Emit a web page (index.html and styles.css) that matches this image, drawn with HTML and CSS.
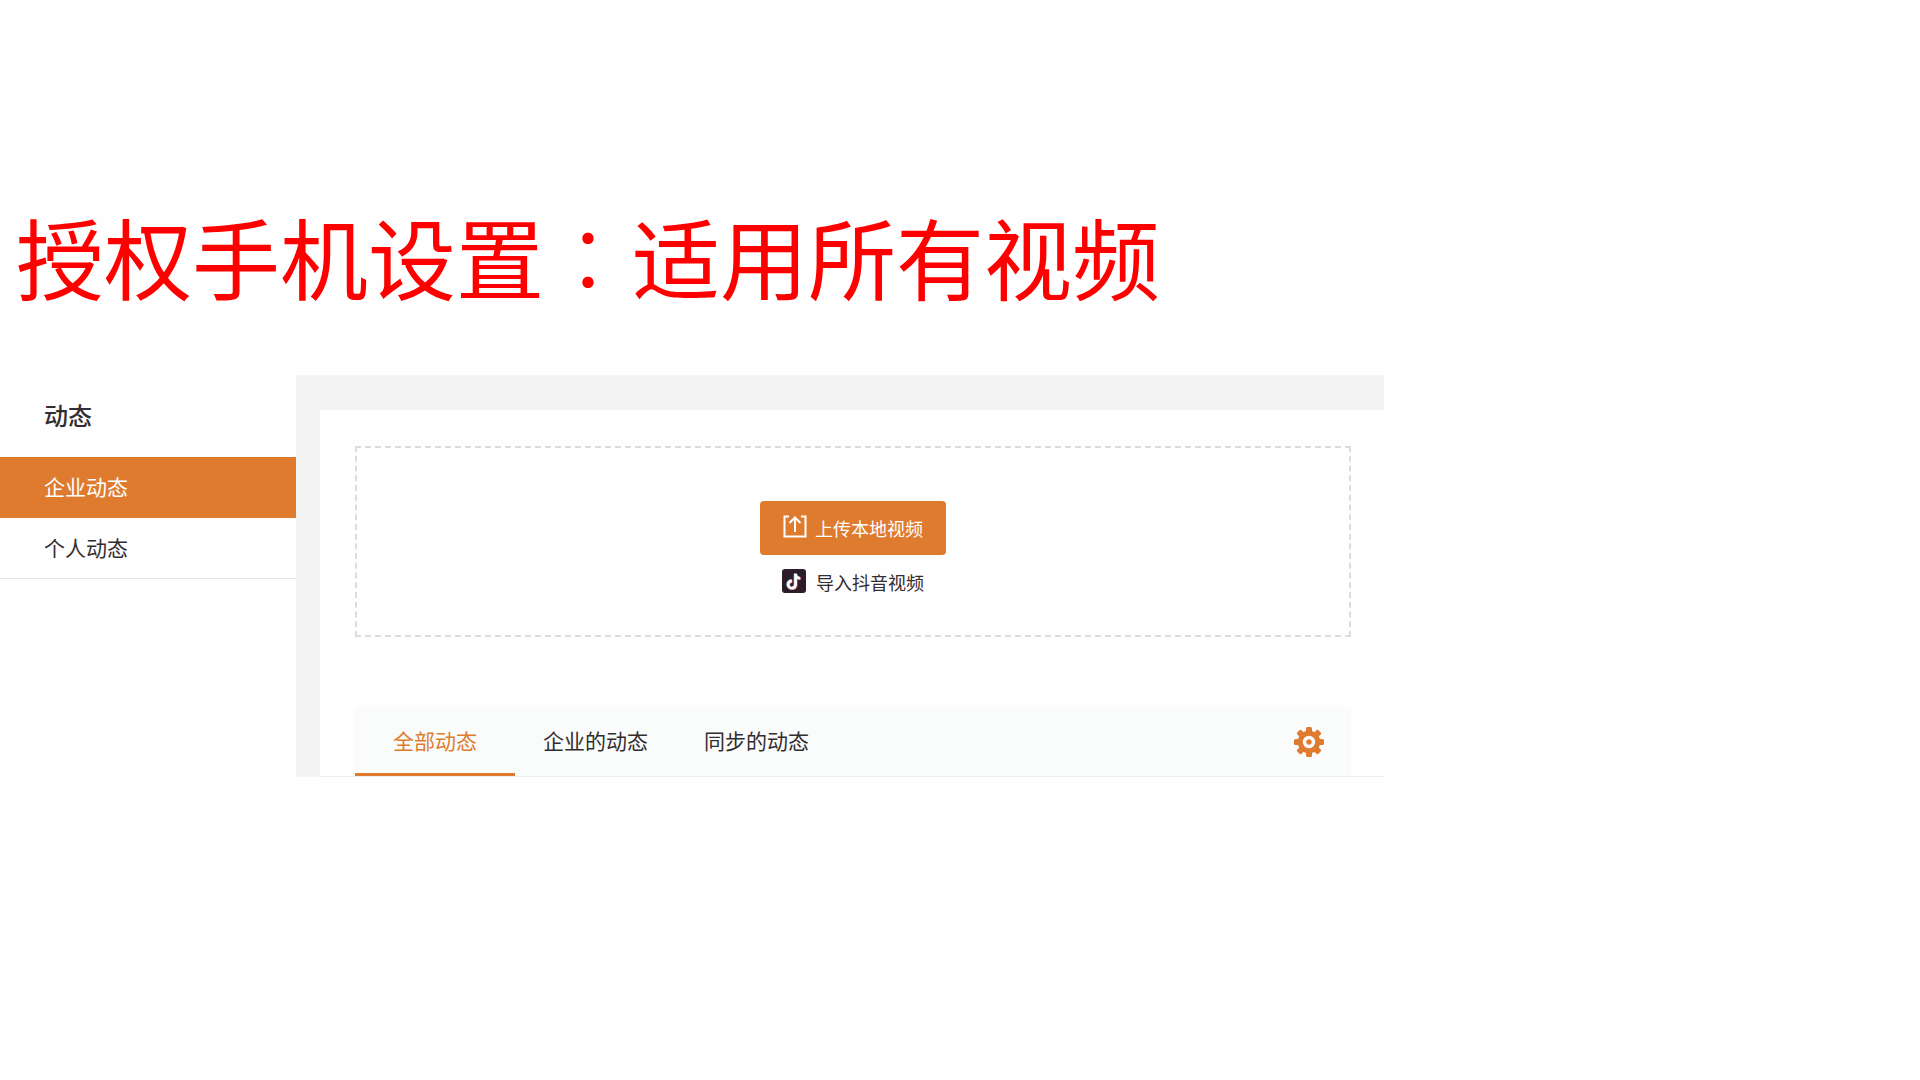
FILE: index.html
```html
<!DOCTYPE html>
<html lang="zh-CN">
<head>
<meta charset="utf-8">
<meta name="viewport" content="width=device-width, initial-scale=1">
<title>授权手机设置</title>
<link rel="stylesheet" href="styles.css">
</head>
<body>
<h1 class="title">授权手机设置<span class="colon" lang="zh-TW">：</span>适用所有视频</h1>
<div class="app">
  <aside class="sidebar">
    <h2 class="sidebar-title">动态</h2>
    <nav class="menu">
      <a class="menu-item active" href="#company">企业动态</a>
      <a class="menu-item" href="#personal">个人动态</a>
    </nav>
  </aside>
  <main class="content">
    <div class="panel">
      <section class="upload">
        <button class="upload-button" type="button">
          <svg class="icon" viewBox="0 0 24 24" fill="none" stroke="currentColor" stroke-width="2" aria-hidden="true"><path d="M6 1.5H1.5v20h21v-20H18M12 17V2.5M6.5 8L12 2.5 17.5 8"/></svg>
          <span>上传本地视频</span>
        </button>
        <a class="import-link" href="#import">
          <svg class="icon" viewBox="0 0 24 24" aria-hidden="true">
            <rect width="24" height="24" rx="3" fill="#2d1d2b"/>
            <g fill="none" stroke-width="2.6">
              <path d="M13 4.5v10.8a3.7 3.7 0 1 1-3.7-3.7M13 4.5c.3 2.7 2 4.3 4.6 4.5" stroke="#8fd6d8"/>
              <path d="M14.2 5.3v10.8a3.7 3.7 0 1 1-3.7-3.7M14.2 5.3c.3 2.7 2 4.3 4.6 4.5" stroke="#e46a76"/>
              <path d="M13.6 4.8v10.8a3.7 3.7 0 1 1-3.7-3.7M13.6 4.8c.3 2.7 2 4.3 4.6 4.5" stroke="#fff"/>
            </g>
          </svg>
          <span>导入抖音视频</span>
        </a>
      </section>
      <div class="tabs">
        <button class="tab selected" type="button">全部动态</button>
        <button class="tab" type="button">企业的动态</button>
        <button class="tab" type="button">同步的动态</button>
        <button class="settings" type="button" aria-label="设置">
          <svg class="gear" viewBox="-15 -15 30 30" aria-hidden="true">
            <g fill="#de7b2f">
              <circle r="11.2"/>
              <g id="teeth">
                <rect x="-3" y="-15" width="6" height="30" rx="1.5"/>
                <rect x="-15" y="-3" width="30" height="6" rx="1.5"/>
              </g>
              <use href="#teeth" transform="rotate(45)"/>
            </g>
            <circle r="4.5" fill="#de7b2f" stroke="#fafcfb" stroke-width="3.4"/>
          </svg>
        </button>
      </div>
    </div>
  </main>
</div>
</body>
</html>
```
FILE: styles.css
```css
* { box-sizing: border-box; }

body {
  margin: 0;
  background: #fefefe;
  color: #332c30;
  font-family: "Noto Sans CJK SC", sans-serif;
  font-size: 21px;
}

button {
  border: 0;
  background: none;
  font: inherit;
  color: inherit;
  cursor: pointer;
}

a { color: inherit; text-decoration: none; }

.title {
  margin: 0;
  padding: 191px 16px 56px;
  color: #fe0000;
  font-size: 88px;
  font-weight: 400;
  line-height: 128px;
}

.colon {
  font-family: "Noto Sans CJK TC", sans-serif;
  font-weight: 300;
}

.app {
  display: flex;
  width: 100%;
  max-width: 1384px;
}

.sidebar { flex: 0 0 296px; }

.sidebar-title {
  margin: 0;
  padding: 0 44px 2px;
  font-size: 24px;
  font-weight: 500;
  line-height: 80px;
}

.menu-item {
  display: block;
  padding: 0 44px 2px;
  border-bottom: 1px solid #e4e4e4;
  line-height: 58px;
}

.menu-item.active {
  border-color: #de7b2f;
  background: #de7b2f;
  color: #fff;
}

.content {
  flex: 1;
  padding: 35px 0 0 24px;
  background: #f4f4f4;
}

.panel {
  padding: 36px 33px 0 35px;
  border-bottom: 1px solid #f0f0f0;
  background: #fefefe;
}

.upload {
  display: flex;
  flex-direction: column;
  align-items: center;
  gap: 10px;
  padding: 53px 0 36px;
  border: 2px dashed #dcdcdc;
  font-size: 18px;
}

.upload-button,
.import-link {
  display: flex;
  align-items: flex-start;
  gap: 8px;
  line-height: 34px;
}

.upload-button {
  padding: 10px 23px;
  border-radius: 4px;
  background: #de7b2f;
  color: #fff;
}

.import-link { gap: 10px; }

.icon {
  width: 24px;
  height: 24px;
  margin-top: 4px;
}

.tabs {
  display: flex;
  align-items: stretch;
  margin-top: 70px;
  background: #fafcfb;
}

.tab {
  padding: 0 28px;
  border-bottom: 3px solid transparent;
  line-height: 66px;
}

.tab.selected {
  padding: 0 38px;
  border-color: #de7b2f;
  color: #de7b2f;
}

.settings {
  display: flex;
  align-items: center;
  margin-left: auto;
  padding: 0 27px;
}

.gear { width: 30px; height: 30px; }
```
